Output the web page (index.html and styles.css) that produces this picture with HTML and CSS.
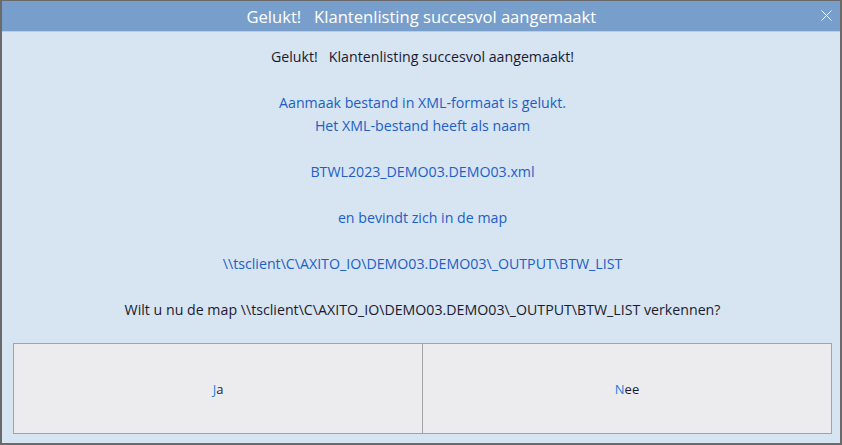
FILE: index.html
```html
<!DOCTYPE html>
<html>
<head>
<meta charset="utf-8">
<link rel="stylesheet" href="styles.css">
</head>
<body>
<div class="window">
  <div class="titlebar">
    <span class="title">Gelukt!&nbsp;&nbsp; Klantenlisting succesvol aangemaakt</span>
    <span class="close"><svg width="11" height="11" viewBox="0 0 11 11"><path d="M0.5 0.5 L10.5 10.5 M10.5 0.5 L0.5 10.5" stroke="#ffffff" stroke-width="1" fill="none"/></svg></span>
  </div>
  <div class="body">
    <div class="message">
      <div class="line dark">Gelukt!&nbsp;&nbsp; Klantenlisting succesvol aangemaakt!</div>
      <div class="line">&nbsp;</div>
      <div class="line blue">Aanmaak bestand in XML-formaat is gelukt.</div>
      <div class="line blue">Het XML-bestand heeft als naam</div>
      <div class="line">&nbsp;</div>
      <div class="line blue">BTWL2023_DEMO03.DEMO03.xml</div>
      <div class="line">&nbsp;</div>
      <div class="line blue">en bevindt zich in de map</div>
      <div class="line">&nbsp;</div>
      <div class="line blue">\\tsclient\C\AXITO_IO\DEMO03.DEMO03\_OUTPUT\BTW_LIST</div>
      <div class="line">&nbsp;</div>
      <div class="line dark">Wilt u nu de map \\tsclient\C\AXITO_IO\DEMO03.DEMO03\_OUTPUT\BTW_LIST verkennen?</div>
    </div>
    <div class="buttons">
      <div class="btn"><span class="mn">J</span>a</div>
      <div class="btn"><span class="mn">N</span>ee</div>
    </div>
  </div>
</div>
</body>
</html>
```
FILE: styles.css
```css
html, body {
  margin: 0;
  padding: 0;
  width: 842px;
  height: 445px;
  overflow: hidden;
}
.window {
  box-sizing: border-box;
  width: 842px;
  height: 445px;
  border: 2px solid #6a6a6a;
  border-top-width: 1px;
  background: #d7e4f2;
  display: flex;
  flex-direction: column;
  font-family: "Open Sans", "Noto Sans", sans-serif;
}
.titlebar {
  height: 30px;
  background: #789fcc;
  display: flex;
  align-items: center;
  justify-content: center;
  position: relative;
  border-bottom: 1px solid #b9cde5;
}
.title {
  color: #ffffff;
  font-size: 17px;
  display: inline-block;
  transform: scaleX(0.975);
  white-space: nowrap;
}
.close {
  position: absolute;
  right: 8px;
  top: 9px;
  line-height: 0;
}
.body {
  flex: 1;
  display: flex;
  flex-direction: column;
  padding: 13px 8px 9px 11px;
}
.message {
  text-align: center;
  font-size: 14.2px;
  line-height: 23px;
}
.line {
  height: 23px;
  white-space: nowrap;
}
.dark { color: #1b1b2e; }
.blue { color: #1c5fc6; }
.buttons {
  margin-top: 22px;
  display: flex;
  height: 91px;
  border: 1px solid #a3a3a3;
  box-sizing: border-box;
}
.btn {
  flex: 1;
  background: #ececee;
  display: flex;
  align-items: center;
  justify-content: center;
  font-size: 13px;
  color: #1b1b2e;
}
.btn + .btn {
  border-left: 1px solid #a3a3a3;
}
.mn { color: #1f7fe0; }
```
